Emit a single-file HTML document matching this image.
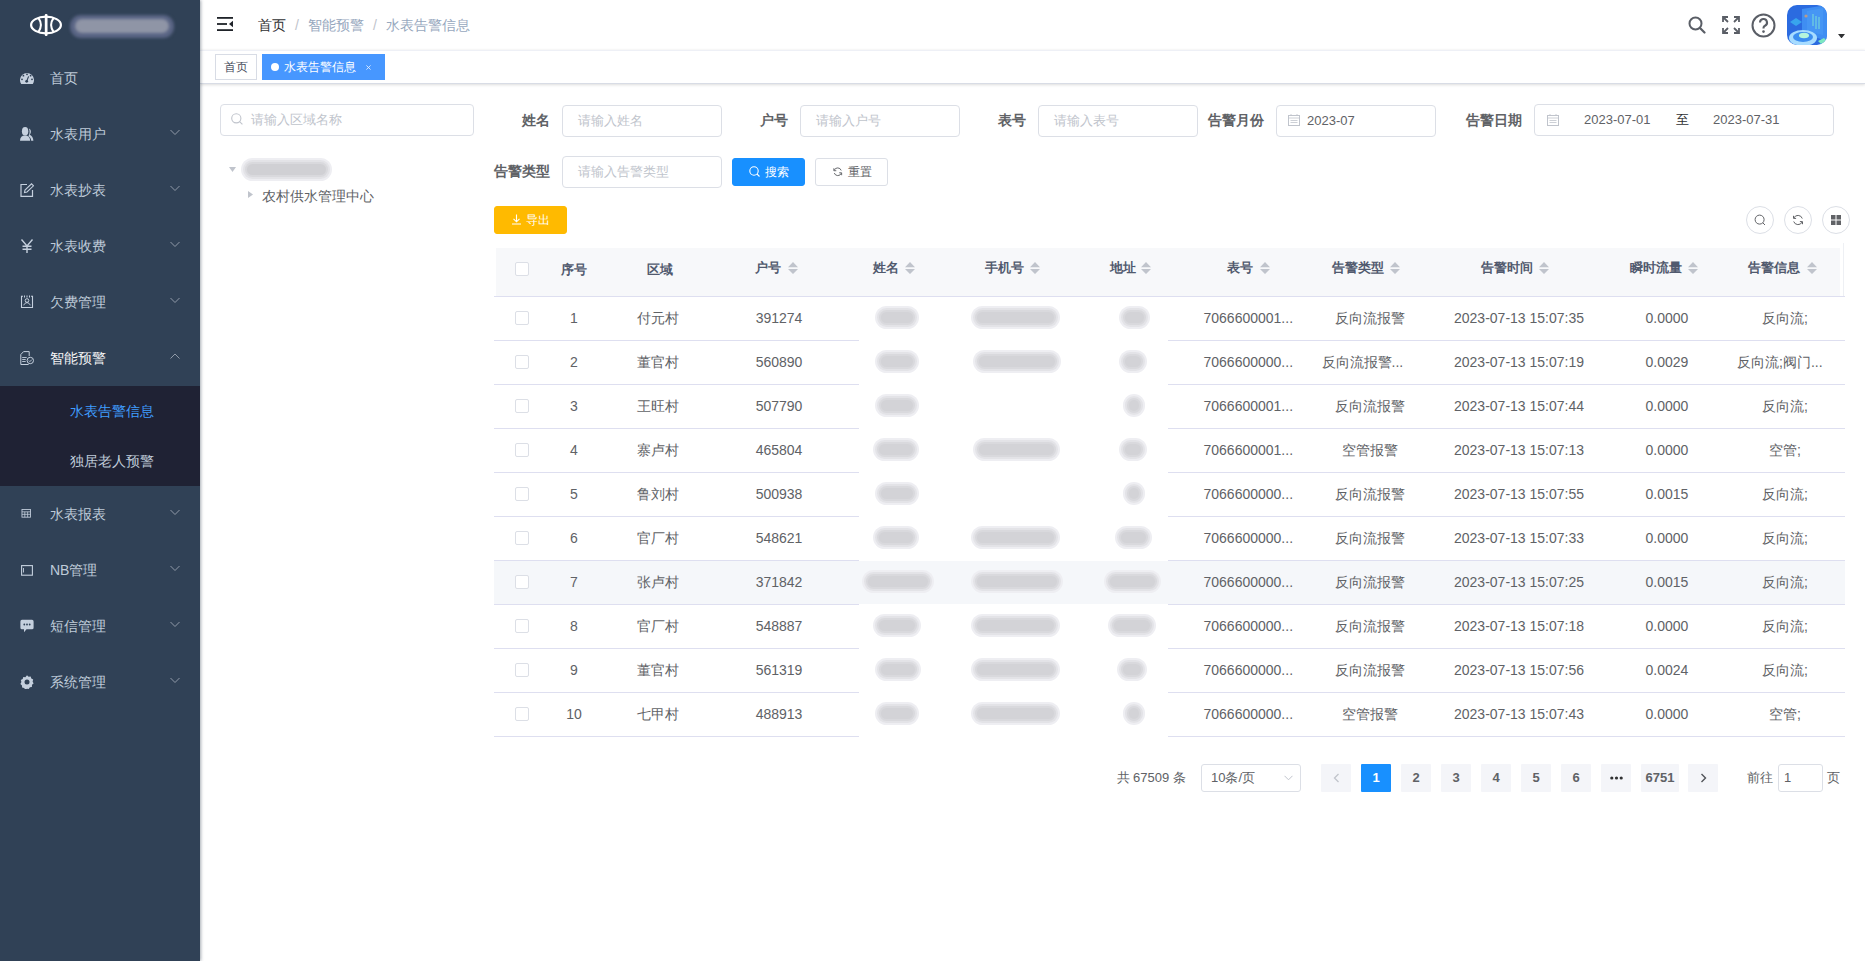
<!DOCTYPE html>
<html><head><meta charset="utf-8">
<style>
*{box-sizing:border-box;margin:0;padding:0}
html,body{width:1865px;height:961px;overflow:hidden;background:#fff;font-family:"Liberation Sans",sans-serif;color:#606266;font-size:14px}
.abs{position:absolute}
#sb{position:absolute;left:0;top:0;width:200px;height:961px;background:#304156;box-shadow:1px 0 3px rgba(0,21,41,.35);z-index:5}
.mi{position:absolute;left:0;width:200px;height:56px;line-height:56px;color:#bfcbd9;font-size:14px}
.mi .ic{position:absolute;left:20px;top:21px;width:14px;height:14px}
.mi .tx{position:absolute;left:50px;top:0}
.mi .ar{position:absolute;left:170px;top:21px;width:10px;height:10px}
.sub{position:absolute;left:0;width:200px;height:50px;line-height:50px;background:#1f2234;color:#bfcbd9}
.sub .tx{position:absolute;left:70px;top:0}
#nav{position:absolute;left:200px;top:0;width:1665px;height:50px;background:#fff}
#tags{position:absolute;left:200px;top:50px;width:1665px;height:34px;background:#fff;border-top:1px solid #eef0f6;border-bottom:1px solid #d8dce5;box-shadow:0 1px 3px 0 rgba(0,0,0,.12),0 0 3px 0 rgba(0,0,0,.04)}
.tag{position:absolute;top:3px;height:26px;line-height:24px;border:1px solid #d8dce5;font-size:12px;color:#495060;padding:0 8px;background:#fff}
.inp{position:absolute;height:32px;border:1px solid #dcdfe6;border-radius:4px;background:#fff;font-size:13px;color:#c0c4cc;line-height:30px;padding-left:15px}
.lbl{position:absolute;font-weight:bold;color:#606266;font-size:14px;line-height:32px;text-align:right}
.hd{font-size:13px;font-weight:bold;color:#515a6e;line-height:20px;white-space:nowrap}
.bd{font-size:14px;color:#606266;line-height:20px;text-align:center;white-space:nowrap}
.pg{height:28px;line-height:28px;text-align:center;background:#f4f5f9;border-radius:1px;font-size:13px;font-weight:bold;color:#606266}
.btn{position:absolute;height:28px;border-radius:3px;font-size:12px;line-height:26px;text-align:center;border:1px solid #dcdfe6;color:#606266;background:#fff}
</style></head><body>
<div id="sb">
  <svg class="abs" style="left:29px;top:13px" width="35" height="24" viewBox="0 0 35 24">
    <ellipse cx="17" cy="12" rx="14.9" ry="8.3" fill="none" stroke="#fff" stroke-width="2.2"/>
    <path d="M9.2 4.6Q14.6 12 9.2 19.4M24.8 4.6Q19.4 12 24.8 19.4" fill="none" stroke="#fff" stroke-width="2"/>
    <rect x="15.8" y="1" width="2.7" height="22" rx="1" fill="#fff"/>
  </svg>
  <div class="abs" style="left:70px;top:15px;width:104px;height:23px;border-radius:11px;background:#5a6585;filter:blur(1.5px)"></div>
  <div class="abs" style="left:75px;top:19px;width:94px;height:14px;border-radius:7px;background:#8f95a6;filter:blur(1.5px)"></div>
<div class="mi" style="top:50px"><svg class="ic" viewBox="0 0 14 14"><path d="M1.2 13A7 7 0 1 1 12.8 13z" fill="#c5d0de"/><g fill="#304156"><circle cx="7" cy="3.3" r=".9"/><circle cx="3.4" cy="4.7" r=".9"/><circle cx="10.6" cy="4.7" r=".9"/><circle cx="2" cy="8.3" r=".9"/><circle cx="12" cy="8.3" r=".9"/><circle cx="6.7" cy="10.3" r="1.4"/></g><path d="M6.7 10.3L8.6 5.4" stroke="#304156" stroke-width="1.1"/></svg><span class="tx">首页</span></div>
<div class="mi" style="top:106px"><svg class="ic" viewBox="0 0 14 14"><ellipse cx="5.1" cy="4.3" rx="3.2" ry="4.3" fill="#c5d0de"/><path d="M0 13.8C0 10.5 2 8.6 5 8.6S10.1 10.5 10.1 13.8z" fill="#c5d0de"/><path d="M8.9 1.6C11.2 2.3 11.6 5.6 9.8 7.8 12 8.8 13.2 11 13.4 13.8H11.2C11 11.6 10.2 10.1 8.4 9.2 10 7 9.8 3.6 8.9 1.6z" fill="#c5d0de"/></svg><span class="tx">水表用户</span><svg class="ar" viewBox="0 0 10 10"><path d="M.5 3L5 7.5 9.5 3" stroke="#909aa8" stroke-width="1" fill="none"/></svg></div>
<div class="mi" style="top:162px"><svg class="ic" viewBox="0 0 14 14"><path d="M7 1.5H1v11.8h11.5V7" stroke="#c5d0de" stroke-width="1.2" fill="none"/><path d="M4.5 9.5 5 7 11.5 0.8l2 2L7 9z" stroke="#c5d0de" stroke-width="1.1" fill="none"/></svg><span class="tx">水表抄表</span><svg class="ar" viewBox="0 0 10 10"><path d="M.5 3L5 7.5 9.5 3" stroke="#909aa8" stroke-width="1" fill="none"/></svg></div>
<div class="mi" style="top:218px"><svg class="ic" viewBox="0 0 14 14"><path d="M1.5 0.5 7 7 12.5 0.5M7 7v7M2.5 7.2h9M2.5 10.2h9" stroke="#c5d0de" stroke-width="1.4" fill="none"/></svg><span class="tx">水表收费</span><svg class="ar" viewBox="0 0 10 10"><path d="M.5 3L5 7.5 9.5 3" stroke="#909aa8" stroke-width="1" fill="none"/></svg></div>
<div class="mi" style="top:274px"><svg class="ic" viewBox="0 0 14 14"><path d="M3 1.2H1.5v11.3h11V1.2H11" stroke="#c5d0de" stroke-width="1.1" fill="none"/><path d="M4.5 0.5v2M7 0.5v2M9.5 0.5v2" stroke="#c5d0de" stroke-width="1"/><circle cx="7" cy="5.5" r="1.8" stroke="#c5d0de" stroke-width="1" fill="none"/><path d="M3.8 10.3c.6-1.8 1.7-2.6 3.2-2.6s2.6.8 3.2 2.6" stroke="#c5d0de" stroke-width="1" fill="none"/></svg><span class="tx">欠费管理</span><svg class="ar" viewBox="0 0 10 10"><path d="M.5 3L5 7.5 9.5 3" stroke="#909aa8" stroke-width="1" fill="none"/></svg></div>
<div class="mi" style="top:330px;color:#f4f4f5"><svg class="ic" viewBox="0 0 14 14"><path d="M8.6 13.5H0.8V3.5L3.6 0.6h5.6v4.5" stroke="#c5d0de" stroke-width="1" fill="none"/><path d="M2.2 6.5h4.5M2.2 8.5h3.5M2.2 10.5h3.5" stroke="#c5d0de" stroke-width="0.9"/><circle cx="10.3" cy="9.5" r="3.2" stroke="#c5d0de" stroke-width="1" fill="none"/><path d="M8.8 9.5l1.1 1.1 2-2" stroke="#c5d0de" stroke-width="0.9" fill="none"/></svg><span class="tx">智能预警</span><svg class="ar" viewBox="0 0 10 10"><path d="M.5 7.5L5 3l4.5 4.5" stroke="#909aa8" stroke-width="1" fill="none"/></svg></div>
<div class="mi" style="top:486px"><svg class="ic" viewBox="0 0 14 14" style="top:23px;left:21px;width:12px;height:11px"><rect x=".6" y=".6" width="10.8" height="9.8" stroke="#c5d0de" stroke-width="1.1" fill="none"/><path d="M.6 3.6h10.8M.6 6.8h10.8M4.2 3.6v6.8M7.8 3.6v6.8" stroke="#c5d0de" stroke-width="1"/></svg><span class="tx">水表报表</span><svg class="ar" viewBox="0 0 10 10"><path d="M.5 3L5 7.5 9.5 3" stroke="#909aa8" stroke-width="1" fill="none"/></svg></div>
<div class="mi" style="top:542px"><svg class="ic" viewBox="0 0 12 11" style="top:23px;left:21px;width:12px;height:11px"><rect x=".6" y=".6" width="10.8" height="9.6" stroke="#c5d0de" stroke-width="1.1" fill="none"/><path d="M2.5 3v4.5" stroke="#c5d0de" stroke-width=".9"/></svg><span class="tx">NB管理</span><svg class="ar" viewBox="0 0 10 10"><path d="M.5 3L5 7.5 9.5 3" stroke="#909aa8" stroke-width="1" fill="none"/></svg></div>
<div class="mi" style="top:598px"><svg class="ic" viewBox="0 0 14 14"><path d="M2 .8h10a1.6 1.6 0 0 1 1.6 1.6v6.3a1.6 1.6 0 0 1-1.6 1.6H6.5L4 13.2V10.3H2A1.6 1.6 0 0 1 .4 8.7V2.4A1.6 1.6 0 0 1 2 .8z" fill="#c5d0de"/><circle cx="4.3" cy="5.5" r=".9" fill="#304156"/><circle cx="7" cy="5.5" r=".9" fill="#304156"/><circle cx="9.7" cy="5.5" r=".9" fill="#304156"/></svg><span class="tx">短信管理</span><svg class="ar" viewBox="0 0 10 10"><path d="M.5 3L5 7.5 9.5 3" stroke="#909aa8" stroke-width="1" fill="none"/></svg></div>
<div class="mi" style="top:654px"><svg class="ic" viewBox="0 0 14 14"><path d="M7 .3l1.6 1.4 2.1-.2.6 2 1.9 1-.6 2 1 1.9-1.6 1.4-.1 2.1-2 .4-1.2 1.7L7 13.7l-1.7.9-1.2-1.7-2-.4-.1-2.1L.4 9 1.4 7.1.8 5.1l1.9-1 .6-2 2.1.2z" fill="#c5d0de"/><circle cx="7" cy="7" r="2.5" fill="#304156"/></svg><span class="tx">系统管理</span><svg class="ar" viewBox="0 0 10 10"><path d="M.5 3L5 7.5 9.5 3" stroke="#909aa8" stroke-width="1" fill="none"/></svg></div>
<div class="abs" style="left:0;top:386px;width:200px;height:100px;background:#1f2234"></div>
<div class="sub" style="top:386px;color:#409eff"><span class="tx">水表告警信息</span></div>
<div class="sub" style="top:436px"><span class="tx">独居老人预警</span></div>
</div>
<div id="nav">
  <svg class="abs" style="left:17px;top:17px" width="16" height="14" viewBox="0 0 16 14"><rect x="0" y="0" width="16" height="1.8" fill="#1f2329"/><rect x="0" y="6.1" width="10" height="1.8" fill="#1f2329"/><rect x="0" y="12.2" width="16" height="1.8" fill="#1f2329"/><path d="M16 3.8v6.4L12 7z" fill="#1f2329"/></svg>
  <div class="abs" style="left:58px;top:15px;line-height:20px;font-size:14px;color:#303133;white-space:nowrap">首页<span style="color:#c0c4cc;margin:0 9px">/</span><span style="color:#97a8be">智能预警</span><span style="color:#c0c4cc;margin:0 9px">/</span><span style="color:#97a8be">水表告警信息</span></div>
  <svg class="abs" style="left:1488px;top:16px" width="18" height="18" viewBox="0 0 18 18"><circle cx="7.5" cy="7.5" r="6" stroke="#5a5e66" stroke-width="2" fill="none"/><path d="M12 12l4.5 4.5" stroke="#5a5e66" stroke-width="2.2" stroke-linecap="round"/></svg>
  <svg class="abs" style="left:1522px;top:16px" width="18" height="18" viewBox="0 0 18 18"><g stroke="#5a5e66" stroke-width="1.8" fill="none"><path d="M1 6V1h5M1 1l5 5"/><path d="M12 1h5v5M17 1l-5 5"/><path d="M1 12v5h5M1 17l5-5"/><path d="M17 12v5h-5M17 17l-5-5"/></g></svg>
  <svg class="abs" style="left:1551px;top:13px" width="25" height="25" viewBox="0 0 25 25"><circle cx="12.5" cy="12.5" r="11" stroke="#5a5e66" stroke-width="2" fill="none"/><path d="M9 9.5a3.5 3.5 0 1 1 5 3.2c-1 .5-1.5 1.1-1.5 2.3v.6" stroke="#5a5e66" stroke-width="2.1" fill="none"/><circle cx="12.5" cy="18.6" r="1.3" fill="#5a5e66"/></svg>
  <svg class="abs" style="left:1587px;top:5px" width="40" height="40" viewBox="0 0 40 40">
    <defs><clipPath id="av"><rect width="40" height="40" rx="10"/></clipPath></defs>
    <g clip-path="url(#av)">
      <rect width="40" height="40" fill="#2b6be0"/>
      <path d="M15 4L40 0V36L15 28z" fill="#3f8ef2"/>
      <path d="M20 6L36 3V30L20 26z" fill="#4a9af5" opacity=".7"/>
      <path d="M26 9v12M29 11v13M32 12v12" stroke="#7fe3d8" stroke-width="1.2" opacity=".8"/>
      <circle cx="19" cy="11" r="1.6" fill="#f0a060" opacity=".7"/>
      <path d="M3 17l6-4 6 4-6 4z" fill="#3cb4f0" opacity=".8"/>
      <ellipse cx="16" cy="33" rx="14" ry="8" fill="#a7dcff"/>
      <ellipse cx="16" cy="32" rx="10" ry="5" fill="#3c8ef0"/>
      <ellipse cx="17" cy="30.5" rx="5" ry="2.8" fill="#b5f5dc"/>
      <path d="M31 36l6-3 3 3-6 3z" fill="#7de8c0"/>
    </g>
  </svg>
  <svg class="abs" style="left:1637.5px;top:33.5px" width="7" height="4.5" viewBox="0 0 8 5"><path d="M0 0h8L4 5z" fill="#303133"/></svg>
</div>
<div id="tags">
  <div class="tag" style="left:15px">首页</div>
  <div class="tag" style="left:62px;background:#4797ff;border-color:#4797ff;color:#fff;padding-left:21px;width:123px">水表告警信息<svg width="5" height="5" viewBox="0 0 6 6" style="margin-left:10px;vertical-align:1px"><path d="M.5 .5l5 5M5.5 .5l-5 5" stroke="#e8f2ff" stroke-width="1"/></svg></div>
  <div class="abs" style="left:71px;top:12px;width:8px;height:8px;border-radius:50%;background:#fff"></div>
</div>
<div id="main">
<!--MAIN-->
<div class="inp" style="left:220px;top:104px;width:254px;padding-left:30px">请输入区域名称</div>
<svg class="abs" style="left:231px;top:113px" width="12" height="12" viewBox="0 0 12 12"><circle cx="5.3" cy="5.3" r="4.6" stroke="#c0c4cc" stroke-width="1.1" fill="none"/><path d="M8.6 8.6l2.8 2.8" stroke="#c0c4cc" stroke-width="1.1"/></svg>
<svg class="abs" style="left:229px;top:167px" width="7" height="5" viewBox="0 0 7 5"><path d="M0 0h7L3.5 5z" fill="#c0c4cc"/></svg>
<div class="abs" style="left:247px;top:164px;width:79px;height:11px;border-radius:6px;background:#d0d0d4;box-shadow:0 0 0 2px #d9d9dd,0 0 0 4px #e3e3e7,0 0 0 6px #eeeef2;filter:blur(.7px)"></div>
<svg class="abs" style="left:248px;top:191px" width="5" height="7" viewBox="0 0 5 7"><path d="M0 0v7L5 3.5z" fill="#c0c4cc"/></svg>
<div class="abs" style="left:262px;top:186px;line-height:20px;color:#606266">农村供水管理中心</div>
<div class="lbl" style="left:450px;top:104px;width:100px;text-align:right">姓名</div>
<div class="inp" style="left:562px;top:105px;width:160px">请输入姓名</div>
<div class="lbl" style="left:688px;top:104px;width:100px;text-align:right">户号</div>
<div class="inp" style="left:800px;top:105px;width:160px">请输入户号</div>
<div class="lbl" style="left:926px;top:104px;width:100px;text-align:right">表号</div>
<div class="inp" style="left:1038px;top:105px;width:160px">请输入表号</div>
<div class="lbl" style="left:1164px;top:104px;width:100px;text-align:right">告警月份</div>
<div class="inp" style="left:1276px;top:105px;width:160px;color:#606266;padding-left:30px">2023-07</div>
<svg class="abs" style="left:1288px;top:114px" width="12" height="12" viewBox="0 0 12 12"><rect x=".5" y="1.5" width="11" height="10" stroke="#c0c4cc" stroke-width="1" fill="none"/><path d="M.5 4h11M3 0v2M9 0v2M2.5 6.5h7M2.5 8.5h7" stroke="#c0c4cc" stroke-width=".8"/></svg>
<div class="lbl" style="left:1422px;top:104px;width:100px;text-align:right">告警日期</div>
<div class="inp" style="left:1534px;top:104px;width:300px;color:#606266;padding-left:0"><span class="abs" style="left:49px;top:0">2023-07-01</span><span class="abs" style="left:141px;top:0;color:#303133">至</span><span class="abs" style="left:178px;top:0">2023-07-31</span></div>
<svg class="abs" style="left:1547px;top:114px" width="12" height="12" viewBox="0 0 12 12"><rect x=".5" y="1.5" width="11" height="10" stroke="#c0c4cc" stroke-width="1" fill="none"/><path d="M.5 4h11M3 0v2M9 0v2M2.5 6.5h7M2.5 8.5h7" stroke="#c0c4cc" stroke-width=".8"/></svg>
<div class="lbl" style="left:450px;top:155px;width:100px;text-align:right">告警类型</div>
<div class="inp" style="left:562px;top:156px;width:160px">请输入告警类型</div>
<div class="btn" style="left:732px;top:158px;width:73px;background:#1890ff;border-color:#1890ff;color:#fff;padding-left:16px">搜索</div>
<svg class="abs" style="left:749px;top:166px" width="11" height="11" viewBox="0 0 11 11"><circle cx="5" cy="5" r="4.2" stroke="#fff" stroke-width="1.1" fill="none"/><path d="M8 8l2.5 2.5" stroke="#fff" stroke-width="1.1"/></svg>
<div class="btn" style="left:815px;top:158px;width:73px;padding-left:17px">重置</div>
<svg class="abs" style="left:833px;top:167px" width="9.5" height="9.5" viewBox="0 0 11 11"><path d="M9.5 4A4.3 4.3 0 0 0 1.4 3.8M1.5 7A4.3 4.3 0 0 0 9.6 7.2" stroke="#606266" stroke-width="1.1" fill="none"/><path d="M1 1.5v2.8h2.8M10 9.5V6.7H7.2" stroke="#606266" stroke-width="1.1" fill="none"/></svg>
<div class="btn" style="left:494px;top:206px;width:73px;background:#ffba00;border-color:#ffba00;color:#fff;padding-left:14px">导出</div>
<svg class="abs" style="left:511px;top:214px" width="11" height="11" viewBox="0 0 11 11"><path d="M5.5 0.5v7M2.5 4.8l3 3 3-3M1 10h9" stroke="#fff" stroke-width="1.1" fill="none"/></svg>
<div class="abs" style="left:1746px;top:206px;width:28px;height:28px;border-radius:50%;border:1px solid #dcdfe6"></div>
<div class="abs" style="left:1784px;top:206px;width:28px;height:28px;border-radius:50%;border:1px solid #dcdfe6"></div>
<div class="abs" style="left:1822px;top:206px;width:28px;height:28px;border-radius:50%;border:1px solid #dcdfe6"></div>
<svg class="abs" style="left:1754px;top:214px" width="12" height="12" viewBox="0 0 12 12"><circle cx="5.6" cy="5.6" r="4.5" stroke="#606266" stroke-width="1" fill="none"/><path d="M8.8 8.8l2.2 2.2" stroke="#606266" stroke-width="1"/></svg>
<svg class="abs" style="left:1792px;top:214px" width="12" height="12" viewBox="0 0 12 12"><path d="M10.3 4.5A4.6 4.6 0 0 0 1.8 4M1.7 7.5A4.6 4.6 0 0 0 10.2 8" stroke="#606266" stroke-width="1" fill="none"/><path d="M1.5 1.8v2.6h2.6M10.5 10.2V7.6H7.9" stroke="#606266" stroke-width="1" fill="none"/></svg>
<svg class="abs" style="left:1830px;top:214px" width="12" height="12" viewBox="0 0 12 12"><rect x="1" y="1" width="4.5" height="4.5" fill="#606266"/><rect x="6.5" y="1" width="4.5" height="4.5" fill="#606266"/><rect x="1" y="6.5" width="4.5" height="4.5" fill="#606266"/><rect x="6.5" y="6.5" width="4.5" height="4.5" fill="#606266"/></svg>
<!--/MAIN-->
<!--TABLE-->
<div class="abs" style="left:496px;top:248px;width:1344px;height:48px;background:#f7f8fa"></div>
<div class="abs" style="left:494px;top:296px;width:1351px;height:1px;background:#dedff0"></div>
<div class="abs" style="left:1843px;top:243px;width:1px;height:53px;background:#eef0f4"></div>
<div class="abs" style="left:515px;top:262px;width:14px;height:14px;border:1px solid #dcdfe6;border-radius:2px;background:#fff"></div>
<div class="abs hd" style="left:560.5px;top:260px">序号</div>
<div class="abs hd" style="left:646.5px;top:260px">区域</div>
<div class="abs hd" style="left:755px;top:258px">户号</div>
<svg class="abs" style="left:788px;top:262px" width="10" height="12" viewBox="0 0 10 12"><path d="M0 5.3L5 0l5 5.3zM0 7l5 5 5-5z" fill="#c0c4cc"/></svg>
<div class="abs hd" style="left:873px;top:258px">姓名</div>
<svg class="abs" style="left:905px;top:262px" width="10" height="12" viewBox="0 0 10 12"><path d="M0 5.3L5 0l5 5.3zM0 7l5 5 5-5z" fill="#c0c4cc"/></svg>
<div class="abs hd" style="left:985px;top:258px">手机号</div>
<svg class="abs" style="left:1030px;top:262px" width="10" height="12" viewBox="0 0 10 12"><path d="M0 5.3L5 0l5 5.3zM0 7l5 5 5-5z" fill="#c0c4cc"/></svg>
<div class="abs hd" style="left:1109.5px;top:258px">地址</div>
<svg class="abs" style="left:1141px;top:262px" width="10" height="12" viewBox="0 0 10 12"><path d="M0 5.3L5 0l5 5.3zM0 7l5 5 5-5z" fill="#c0c4cc"/></svg>
<div class="abs hd" style="left:1226.5px;top:258px">表号</div>
<svg class="abs" style="left:1260px;top:262px" width="10" height="12" viewBox="0 0 10 12"><path d="M0 5.3L5 0l5 5.3zM0 7l5 5 5-5z" fill="#c0c4cc"/></svg>
<div class="abs hd" style="left:1332px;top:258px">告警类型</div>
<svg class="abs" style="left:1390px;top:262px" width="10" height="12" viewBox="0 0 10 12"><path d="M0 5.3L5 0l5 5.3zM0 7l5 5 5-5z" fill="#c0c4cc"/></svg>
<div class="abs hd" style="left:1481px;top:258px">告警时间</div>
<svg class="abs" style="left:1539px;top:262px" width="10" height="12" viewBox="0 0 10 12"><path d="M0 5.3L5 0l5 5.3zM0 7l5 5 5-5z" fill="#c0c4cc"/></svg>
<div class="abs hd" style="left:1630px;top:258px">瞬时流量</div>
<svg class="abs" style="left:1688px;top:262px" width="10" height="12" viewBox="0 0 10 12"><path d="M0 5.3L5 0l5 5.3zM0 7l5 5 5-5z" fill="#c0c4cc"/></svg>
<div class="abs hd" style="left:1748px;top:258px">告警信息</div>
<svg class="abs" style="left:1807px;top:262px" width="10" height="12" viewBox="0 0 10 12"><path d="M0 5.3L5 0l5 5.3zM0 7l5 5 5-5z" fill="#c0c4cc"/></svg>
<div class="abs" style="left:494px;top:340px;width:365px;height:1px;background:#dedff0"></div>
<div class="abs" style="left:1168px;top:340px;width:677px;height:1px;background:#dedff0"></div>
<div class="abs" style="left:515px;top:311px;width:14px;height:14px;border:1px solid #dcdfe6;border-radius:2px;background:#fff"></div>
<div class="abs bd" style="left:554.0px;top:308px;width:40px;">1</div>
<div class="abs bd" style="left:618.0px;top:308px;width:80px;">付元村</div>
<div class="abs bd" style="left:739.0px;top:308px;width:80px;">391274</div>
<div class="abs bd" style="left:1203.5px;top:308px;text-align:left">7066600001...</div>
<div class="abs bd" style="left:1319.5px;top:308px;width:100px;">反向流报警</div>
<div class="abs bd" style="left:1439.0px;top:308px;width:160px;">2023-07-13 15:07:35</div>
<div class="abs bd" style="left:1627.0px;top:308px;width:80px;">0.0000</div>
<div class="abs bd" style="left:1745.0px;top:308px;width:80px;">反向流;</div>
<div class="abs" style="left:881px;top:312px;width:32px;height:11px;border-radius:6px;background:#d3d3d7;box-shadow:0 0 0 2px #d9d9dd,0 0 0 4px #e3e3e7,0 0 0 6px #eeeef2;filter:blur(.7px)"></div>
<div class="abs" style="left:977px;top:312px;width:77px;height:11px;border-radius:6px;background:#d3d3d7;box-shadow:0 0 0 2px #d9d9dd,0 0 0 4px #e3e3e7,0 0 0 6px #eeeef2;filter:blur(.7px)"></div>
<div class="abs" style="left:1125px;top:312px;width:19px;height:11px;border-radius:6px;background:#d3d3d7;box-shadow:0 0 0 2px #d9d9dd,0 0 0 4px #e3e3e7,0 0 0 6px #eeeef2;filter:blur(.7px)"></div>
<div class="abs" style="left:494px;top:384px;width:365px;height:1px;background:#dedff0"></div>
<div class="abs" style="left:1168px;top:384px;width:677px;height:1px;background:#dedff0"></div>
<div class="abs" style="left:515px;top:355px;width:14px;height:14px;border:1px solid #dcdfe6;border-radius:2px;background:#fff"></div>
<div class="abs bd" style="left:554.0px;top:352px;width:40px;">2</div>
<div class="abs bd" style="left:618.0px;top:352px;width:80px;">董官村</div>
<div class="abs bd" style="left:739.0px;top:352px;width:80px;">560890</div>
<div class="abs bd" style="left:1203.5px;top:352px;text-align:left">7066600000...</div>
<div class="abs bd" style="left:1321.5px;top:352px;text-align:left">反向流报警...</div>
<div class="abs bd" style="left:1439.0px;top:352px;width:160px;">2023-07-13 15:07:19</div>
<div class="abs bd" style="left:1627.0px;top:352px;width:80px;">0.0029</div>
<div class="abs bd" style="left:1737px;top:352px;text-align:left">反向流;阀门...</div>
<div class="abs" style="left:881px;top:356px;width:32px;height:11px;border-radius:6px;background:#d3d3d7;box-shadow:0 0 0 2px #d9d9dd,0 0 0 4px #e3e3e7,0 0 0 6px #eeeef2;filter:blur(.7px)"></div>
<div class="abs" style="left:979px;top:356px;width:76px;height:11px;border-radius:6px;background:#d3d3d7;box-shadow:0 0 0 2px #d9d9dd,0 0 0 4px #e3e3e7,0 0 0 6px #eeeef2;filter:blur(.7px)"></div>
<div class="abs" style="left:1125px;top:356px;width:16px;height:11px;border-radius:6px;background:#d3d3d7;box-shadow:0 0 0 2px #d9d9dd,0 0 0 4px #e3e3e7,0 0 0 6px #eeeef2;filter:blur(.7px)"></div>
<div class="abs" style="left:494px;top:428px;width:365px;height:1px;background:#dedff0"></div>
<div class="abs" style="left:1168px;top:428px;width:677px;height:1px;background:#dedff0"></div>
<div class="abs" style="left:515px;top:399px;width:14px;height:14px;border:1px solid #dcdfe6;border-radius:2px;background:#fff"></div>
<div class="abs bd" style="left:554.0px;top:396px;width:40px;">3</div>
<div class="abs bd" style="left:618.0px;top:396px;width:80px;">王旺村</div>
<div class="abs bd" style="left:739.0px;top:396px;width:80px;">507790</div>
<div class="abs bd" style="left:1203.5px;top:396px;text-align:left">7066600001...</div>
<div class="abs bd" style="left:1319.5px;top:396px;width:100px;">反向流报警</div>
<div class="abs bd" style="left:1439.0px;top:396px;width:160px;">2023-07-13 15:07:44</div>
<div class="abs bd" style="left:1627.0px;top:396px;width:80px;">0.0000</div>
<div class="abs bd" style="left:1745.0px;top:396px;width:80px;">反向流;</div>
<div class="abs" style="left:881px;top:400px;width:32px;height:11px;border-radius:6px;background:#d3d3d7;box-shadow:0 0 0 2px #d9d9dd,0 0 0 4px #e3e3e7,0 0 0 6px #eeeef2;filter:blur(.7px)"></div>
<div class="abs" style="left:1129px;top:400px;width:10px;height:11px;border-radius:6px;background:#d3d3d7;box-shadow:0 0 0 2px #d9d9dd,0 0 0 4px #e3e3e7,0 0 0 6px #eeeef2;filter:blur(.7px)"></div>
<div class="abs" style="left:494px;top:472px;width:365px;height:1px;background:#dedff0"></div>
<div class="abs" style="left:1168px;top:472px;width:677px;height:1px;background:#dedff0"></div>
<div class="abs" style="left:515px;top:443px;width:14px;height:14px;border:1px solid #dcdfe6;border-radius:2px;background:#fff"></div>
<div class="abs bd" style="left:554.0px;top:440px;width:40px;">4</div>
<div class="abs bd" style="left:618.0px;top:440px;width:80px;">寨卢村</div>
<div class="abs bd" style="left:739.0px;top:440px;width:80px;">465804</div>
<div class="abs bd" style="left:1203.5px;top:440px;text-align:left">7066600001...</div>
<div class="abs bd" style="left:1319.5px;top:440px;width:100px;">空管报警</div>
<div class="abs bd" style="left:1439.0px;top:440px;width:160px;">2023-07-13 15:07:13</div>
<div class="abs bd" style="left:1627.0px;top:440px;width:80px;">0.0000</div>
<div class="abs bd" style="left:1745.0px;top:440px;width:80px;">空管;</div>
<div class="abs" style="left:879px;top:444px;width:34px;height:11px;border-radius:6px;background:#d3d3d7;box-shadow:0 0 0 2px #d9d9dd,0 0 0 4px #e3e3e7,0 0 0 6px #eeeef2;filter:blur(.7px)"></div>
<div class="abs" style="left:979px;top:444px;width:75px;height:11px;border-radius:6px;background:#d3d3d7;box-shadow:0 0 0 2px #d9d9dd,0 0 0 4px #e3e3e7,0 0 0 6px #eeeef2;filter:blur(.7px)"></div>
<div class="abs" style="left:1125px;top:444px;width:16px;height:11px;border-radius:6px;background:#d3d3d7;box-shadow:0 0 0 2px #d9d9dd,0 0 0 4px #e3e3e7,0 0 0 6px #eeeef2;filter:blur(.7px)"></div>
<div class="abs" style="left:494px;top:516px;width:365px;height:1px;background:#dedff0"></div>
<div class="abs" style="left:1168px;top:516px;width:677px;height:1px;background:#dedff0"></div>
<div class="abs" style="left:515px;top:487px;width:14px;height:14px;border:1px solid #dcdfe6;border-radius:2px;background:#fff"></div>
<div class="abs bd" style="left:554.0px;top:484px;width:40px;">5</div>
<div class="abs bd" style="left:618.0px;top:484px;width:80px;">鲁刘村</div>
<div class="abs bd" style="left:739.0px;top:484px;width:80px;">500938</div>
<div class="abs bd" style="left:1203.5px;top:484px;text-align:left">7066600000...</div>
<div class="abs bd" style="left:1319.5px;top:484px;width:100px;">反向流报警</div>
<div class="abs bd" style="left:1439.0px;top:484px;width:160px;">2023-07-13 15:07:55</div>
<div class="abs bd" style="left:1627.0px;top:484px;width:80px;">0.0015</div>
<div class="abs bd" style="left:1745.0px;top:484px;width:80px;">反向流;</div>
<div class="abs" style="left:881px;top:488px;width:32px;height:11px;border-radius:6px;background:#d3d3d7;box-shadow:0 0 0 2px #d9d9dd,0 0 0 4px #e3e3e7,0 0 0 6px #eeeef2;filter:blur(.7px)"></div>
<div class="abs" style="left:1129px;top:488px;width:10px;height:11px;border-radius:6px;background:#d3d3d7;box-shadow:0 0 0 2px #d9d9dd,0 0 0 4px #e3e3e7,0 0 0 6px #eeeef2;filter:blur(.7px)"></div>
<div class="abs" style="left:494px;top:560px;width:365px;height:1px;background:#dedff0"></div>
<div class="abs" style="left:1168px;top:560px;width:677px;height:1px;background:#dedff0"></div>
<div class="abs" style="left:515px;top:531px;width:14px;height:14px;border:1px solid #dcdfe6;border-radius:2px;background:#fff"></div>
<div class="abs bd" style="left:554.0px;top:528px;width:40px;">6</div>
<div class="abs bd" style="left:618.0px;top:528px;width:80px;">官厂村</div>
<div class="abs bd" style="left:739.0px;top:528px;width:80px;">548621</div>
<div class="abs bd" style="left:1203.5px;top:528px;text-align:left">7066600000...</div>
<div class="abs bd" style="left:1319.5px;top:528px;width:100px;">反向流报警</div>
<div class="abs bd" style="left:1439.0px;top:528px;width:160px;">2023-07-13 15:07:33</div>
<div class="abs bd" style="left:1627.0px;top:528px;width:80px;">0.0000</div>
<div class="abs bd" style="left:1745.0px;top:528px;width:80px;">反向流;</div>
<div class="abs" style="left:879px;top:532px;width:34px;height:11px;border-radius:6px;background:#d3d3d7;box-shadow:0 0 0 2px #d9d9dd,0 0 0 4px #e3e3e7,0 0 0 6px #eeeef2;filter:blur(.7px)"></div>
<div class="abs" style="left:977px;top:532px;width:77px;height:11px;border-radius:6px;background:#d3d3d7;box-shadow:0 0 0 2px #d9d9dd,0 0 0 4px #e3e3e7,0 0 0 6px #eeeef2;filter:blur(.7px)"></div>
<div class="abs" style="left:1121px;top:532px;width:25px;height:11px;border-radius:6px;background:#d3d3d7;box-shadow:0 0 0 2px #d9d9dd,0 0 0 4px #e3e3e7,0 0 0 6px #eeeef2;filter:blur(.7px)"></div>
<div class="abs" style="left:494px;top:561px;width:1351px;height:43px;background:#f5f7fa"></div>
<div class="abs" style="left:494px;top:604px;width:365px;height:1px;background:#dedff0"></div>
<div class="abs" style="left:1168px;top:604px;width:677px;height:1px;background:#dedff0"></div>
<div class="abs" style="left:515px;top:575px;width:14px;height:14px;border:1px solid #dcdfe6;border-radius:2px;background:#fff"></div>
<div class="abs bd" style="left:554.0px;top:572px;width:40px;">7</div>
<div class="abs bd" style="left:618.0px;top:572px;width:80px;">张卢村</div>
<div class="abs bd" style="left:739.0px;top:572px;width:80px;">371842</div>
<div class="abs bd" style="left:1203.5px;top:572px;text-align:left">7066600000...</div>
<div class="abs bd" style="left:1319.5px;top:572px;width:100px;">反向流报警</div>
<div class="abs bd" style="left:1439.0px;top:572px;width:160px;">2023-07-13 15:07:25</div>
<div class="abs bd" style="left:1627.0px;top:572px;width:80px;">0.0015</div>
<div class="abs bd" style="left:1745.0px;top:572px;width:80px;">反向流;</div>
<div class="abs" style="left:868px;top:576px;width:60px;height:11px;border-radius:6px;background:#d3d3d7;box-shadow:0 0 0 2px #d9d9dd,0 0 0 4px #e3e3e7,0 0 0 6px #eeeef2;filter:blur(.7px)"></div>
<div class="abs" style="left:977px;top:576px;width:80px;height:11px;border-radius:6px;background:#d3d3d7;box-shadow:0 0 0 2px #d9d9dd,0 0 0 4px #e3e3e7,0 0 0 6px #eeeef2;filter:blur(.7px)"></div>
<div class="abs" style="left:1110px;top:576px;width:45px;height:11px;border-radius:6px;background:#d3d3d7;box-shadow:0 0 0 2px #d9d9dd,0 0 0 4px #e3e3e7,0 0 0 6px #eeeef2;filter:blur(.7px)"></div>
<div class="abs" style="left:494px;top:648px;width:365px;height:1px;background:#dedff0"></div>
<div class="abs" style="left:1168px;top:648px;width:677px;height:1px;background:#dedff0"></div>
<div class="abs" style="left:515px;top:619px;width:14px;height:14px;border:1px solid #dcdfe6;border-radius:2px;background:#fff"></div>
<div class="abs bd" style="left:554.0px;top:616px;width:40px;">8</div>
<div class="abs bd" style="left:618.0px;top:616px;width:80px;">官厂村</div>
<div class="abs bd" style="left:739.0px;top:616px;width:80px;">548887</div>
<div class="abs bd" style="left:1203.5px;top:616px;text-align:left">7066600000...</div>
<div class="abs bd" style="left:1319.5px;top:616px;width:100px;">反向流报警</div>
<div class="abs bd" style="left:1439.0px;top:616px;width:160px;">2023-07-13 15:07:18</div>
<div class="abs bd" style="left:1627.0px;top:616px;width:80px;">0.0000</div>
<div class="abs bd" style="left:1745.0px;top:616px;width:80px;">反向流;</div>
<div class="abs" style="left:879px;top:620px;width:36px;height:11px;border-radius:6px;background:#d3d3d7;box-shadow:0 0 0 2px #d9d9dd,0 0 0 4px #e3e3e7,0 0 0 6px #eeeef2;filter:blur(.7px)"></div>
<div class="abs" style="left:977px;top:620px;width:77px;height:11px;border-radius:6px;background:#d3d3d7;box-shadow:0 0 0 2px #d9d9dd,0 0 0 4px #e3e3e7,0 0 0 6px #eeeef2;filter:blur(.7px)"></div>
<div class="abs" style="left:1114px;top:620px;width:36px;height:11px;border-radius:6px;background:#d3d3d7;box-shadow:0 0 0 2px #d9d9dd,0 0 0 4px #e3e3e7,0 0 0 6px #eeeef2;filter:blur(.7px)"></div>
<div class="abs" style="left:494px;top:692px;width:365px;height:1px;background:#dedff0"></div>
<div class="abs" style="left:1168px;top:692px;width:677px;height:1px;background:#dedff0"></div>
<div class="abs" style="left:515px;top:663px;width:14px;height:14px;border:1px solid #dcdfe6;border-radius:2px;background:#fff"></div>
<div class="abs bd" style="left:554.0px;top:660px;width:40px;">9</div>
<div class="abs bd" style="left:618.0px;top:660px;width:80px;">董官村</div>
<div class="abs bd" style="left:739.0px;top:660px;width:80px;">561319</div>
<div class="abs bd" style="left:1203.5px;top:660px;text-align:left">7066600000...</div>
<div class="abs bd" style="left:1319.5px;top:660px;width:100px;">反向流报警</div>
<div class="abs bd" style="left:1439.0px;top:660px;width:160px;">2023-07-13 15:07:56</div>
<div class="abs bd" style="left:1627.0px;top:660px;width:80px;">0.0024</div>
<div class="abs bd" style="left:1745.0px;top:660px;width:80px;">反向流;</div>
<div class="abs" style="left:881px;top:664px;width:34px;height:11px;border-radius:6px;background:#d3d3d7;box-shadow:0 0 0 2px #d9d9dd,0 0 0 4px #e3e3e7,0 0 0 6px #eeeef2;filter:blur(.7px)"></div>
<div class="abs" style="left:977px;top:664px;width:77px;height:11px;border-radius:6px;background:#d3d3d7;box-shadow:0 0 0 2px #d9d9dd,0 0 0 4px #e3e3e7,0 0 0 6px #eeeef2;filter:blur(.7px)"></div>
<div class="abs" style="left:1123px;top:664px;width:18px;height:11px;border-radius:6px;background:#d3d3d7;box-shadow:0 0 0 2px #d9d9dd,0 0 0 4px #e3e3e7,0 0 0 6px #eeeef2;filter:blur(.7px)"></div>
<div class="abs" style="left:494px;top:736px;width:365px;height:1px;background:#dedff0"></div>
<div class="abs" style="left:1168px;top:736px;width:677px;height:1px;background:#dedff0"></div>
<div class="abs" style="left:515px;top:707px;width:14px;height:14px;border:1px solid #dcdfe6;border-radius:2px;background:#fff"></div>
<div class="abs bd" style="left:554.0px;top:704px;width:40px;">10</div>
<div class="abs bd" style="left:618.0px;top:704px;width:80px;">七甲村</div>
<div class="abs bd" style="left:739.0px;top:704px;width:80px;">488913</div>
<div class="abs bd" style="left:1203.5px;top:704px;text-align:left">7066600000...</div>
<div class="abs bd" style="left:1319.5px;top:704px;width:100px;">空管报警</div>
<div class="abs bd" style="left:1439.0px;top:704px;width:160px;">2023-07-13 15:07:43</div>
<div class="abs bd" style="left:1627.0px;top:704px;width:80px;">0.0000</div>
<div class="abs bd" style="left:1745.0px;top:704px;width:80px;">空管;</div>
<div class="abs" style="left:881px;top:708px;width:32px;height:11px;border-radius:6px;background:#d3d3d7;box-shadow:0 0 0 2px #d9d9dd,0 0 0 4px #e3e3e7,0 0 0 6px #eeeef2;filter:blur(.7px)"></div>
<div class="abs" style="left:977px;top:708px;width:77px;height:11px;border-radius:6px;background:#d3d3d7;box-shadow:0 0 0 2px #d9d9dd,0 0 0 4px #e3e3e7,0 0 0 6px #eeeef2;filter:blur(.7px)"></div>
<div class="abs" style="left:1129px;top:708px;width:10px;height:11px;border-radius:6px;background:#d3d3d7;box-shadow:0 0 0 2px #d9d9dd,0 0 0 4px #e3e3e7,0 0 0 6px #eeeef2;filter:blur(.7px)"></div>
<div class="abs" style="left:1116.5px;top:764px;line-height:28px;font-size:13px;color:#606266">共 67509 条</div>
<div class="abs" style="left:1201px;top:764px;width:100px;height:28px;border:1px solid #dcdfe6;border-radius:3px;line-height:26px;font-size:13px;color:#606266;padding-left:9px">10条/页</div>
<svg class="abs" style="left:1284px;top:775px" width="9" height="6" viewBox="0 0 9 6"><path d="M.5 .8L4.5 4.8 8.5 .8" stroke="#c0c4cc" stroke-width="1" fill="none"/></svg>
<div class="abs pg" style="left:1321px;top:764px;width:30px;color:#c0c4cc"><svg width="7" height="10" viewBox="0 0 7 10" style="margin-top:9px;vertical-align:top"><path d="M5.5 1L1.5 5l4 4" stroke="#c0c4cc" stroke-width="1.3" fill="none"/></svg></div>
<div class="abs pg" style="left:1361px;top:764px;width:30px;background:#1890ff;color:#fff">1</div>
<div class="abs pg" style="left:1401px;top:764px;width:30px;">2</div>
<div class="abs pg" style="left:1441px;top:764px;width:30px;">3</div>
<div class="abs pg" style="left:1481px;top:764px;width:30px;">4</div>
<div class="abs pg" style="left:1521px;top:764px;width:30px;">5</div>
<div class="abs pg" style="left:1561px;top:764px;width:30px;">6</div>
<div class="abs pg" style="left:1601px;top:764px;width:30px;"><svg width="13" height="4" viewBox="0 0 13 4" style="margin-top:12px;vertical-align:top"><circle cx="1.8" cy="2" r="1.6" fill="#303133"/><circle cx="6.5" cy="2" r="1.6" fill="#303133"/><circle cx="11.2" cy="2" r="1.6" fill="#303133"/></svg></div>
<div class="abs pg" style="left:1641px;top:764px;width:38px;">6751</div>
<div class="abs pg" style="left:1688px;top:764px;width:30px;"><svg width="7" height="10" viewBox="0 0 7 10" style="margin-top:9px;vertical-align:top"><path d="M1.5 1L5.5 5 1.5 9" stroke="#505358" stroke-width="1.4" fill="none"/></svg></div>
<div class="abs" style="left:1747px;top:764px;line-height:28px;font-size:13px;color:#606266">前往</div>
<div class="abs" style="left:1778px;top:764px;width:45px;height:28px;border:1px solid #dcdfe6;border-radius:3px;line-height:26px;font-size:13px;color:#606266;padding-left:5px">1</div>
<div class="abs" style="left:1827px;top:764px;line-height:28px;font-size:13px;color:#606266">页</div>
<!--/TABLE-->
</div>
</body></html>
